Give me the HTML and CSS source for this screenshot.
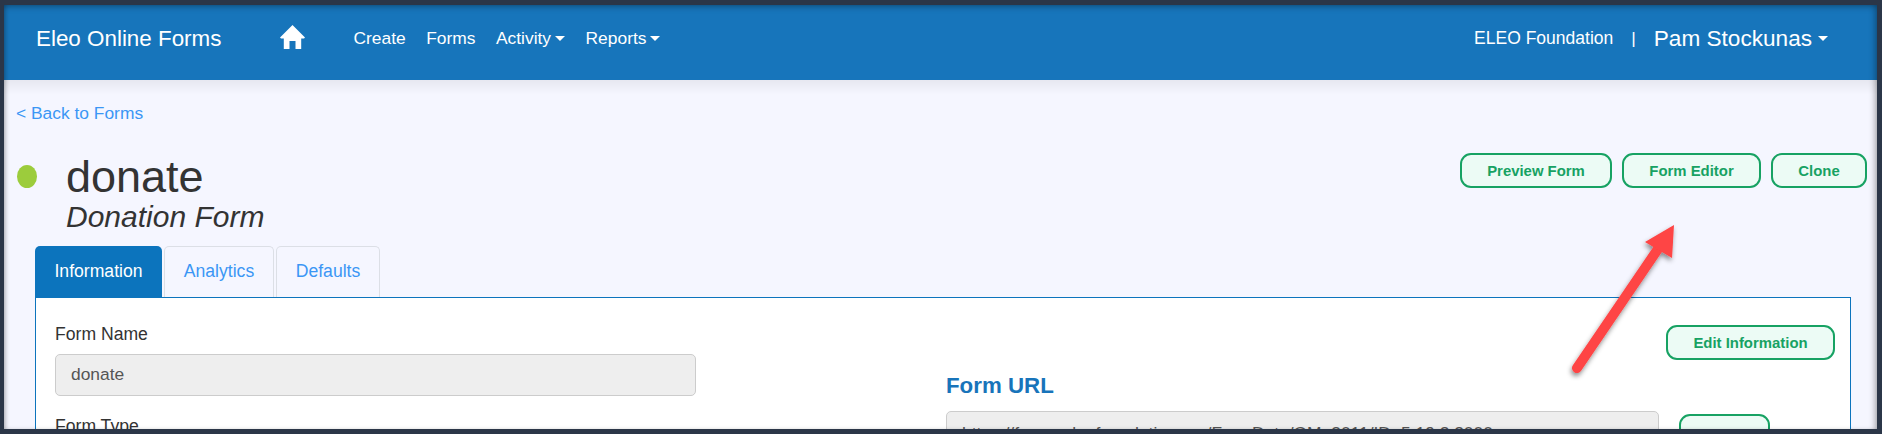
FILE: index.html
```html
<!DOCTYPE html>
<html lang="en">
<head>
<meta charset="utf-8">
<title>Eleo Online Forms</title>
<link rel="stylesheet" href="styles.css">
</head>
<body>
<div class="frame">
  <nav class="navbar">
    <a class="brand">Eleo Online Forms</a>
    <svg class="home" viewBox="0 0 25 24"><path d="M12.5 0 25 12.6 24 13.6h-2.8V24h-5.7v-8h-6v8H3.8V13.6H1L0 12.6z" fill="#fff"/></svg>
    <ul class="menu">
      <li class="menu-item">Create</li>
      <li class="menu-item">Forms</li>
      <li class="menu-item caret">Activity</li>
      <li class="menu-item caret">Reports</li>
    </ul>
    <div class="account">
      <span class="org">ELEO Foundation</span>
      <span class="sep">|</span>
      <span class="user caret">Pam Stockunas</span>
    </div>
  </nav>
  <main class="content">
    <a class="back">&lt; Back to Forms</a>
    <header class="head">
      <span class="dot"></span>
      <div class="titles">
        <h1 class="title">donate</h1>
        <p class="subtitle">Donation Form</p>
      </div>
      <div class="actions">
        <a class="btn btn-preview">Preview Form</a>
        <a class="btn btn-editor">Form Editor</a>
        <a class="btn btn-clone">Clone</a>
      </div>
    </header>
    <ul class="tabs">
      <li class="tab tab-active">Information</li>
      <li class="tab">Analytics</li>
      <li class="tab">Defaults</li>
    </ul>
    <section class="panel">
      <div class="col-left">
        <label class="label">Form Name</label>
        <div class="input input-name">donate</div>
        <label class="label label-type">Form Type</label>
      </div>
      <div class="col-right">
        <div class="edit-row"><a class="btn btn-edit">Edit Information</a></div>
        <h2 class="url-title">Form URL</h2>
        <div class="url-row">
          <div class="input input-url">https://forms.eleofoundation.org/FormData/GM_3011/ID=5,19,2,2000</div>
          <a class="btn btn-copy">Copy</a>
        </div>
      </div>
    </section>
  </main>
  <svg class="arrow" viewBox="0 0 130 170">
    <defs>
      <filter id="arrow-shadow" x="-20%" y="-20%" width="140%" height="140%">
        <feDropShadow dx="-1" dy="3" stdDeviation="2.5" flood-color="#000" flood-opacity=".45"/>
      </filter>
    </defs>
    <g filter="url(#arrow-shadow)">
      <path d="M23 148 106 26" stroke="#fe4444" stroke-width="10" stroke-linecap="round" fill="none"/>
      <path d="M120 5 91 22 118 38z" fill="#fe4444"/>
    </g>
  </svg>
  <div class="shade"></div>
</div>
</body>
</html>
```
FILE: styles.css
```css
* { box-sizing: border-box; }
html, body { margin: 0; height: 100%; }
body {
  background: #2b3648;
  padding: 5px 5px 5px 4px;
  overflow: hidden;
  font-family: "Liberation Sans", Arial, sans-serif;
  font-size: 17.4px;
  color: #333;
}
.frame {
  position: relative;
  height: 424px;
  overflow: hidden;
  background: #f5f6ff;
}
ul { list-style: none; margin: 0; padding: 0; }
.navbar {
  display: flex;
  align-items: center;
  height: 75px;
  padding: 0 49px 8px 32px;
  background: #1775bb;
  color: #fff;
}
.brand { font-size: 22.4px; width: 244px; }
.home { width: 25px; height: 24px; margin-right: 48.5px; margin-top: -3px; }
.menu { display: flex; gap: 20.5px; }
.caret::after {
  content: "";
  display: inline-block;
  margin-left: 4px;
  vertical-align: 3px;
  border-top: 5px solid currentColor;
  border-left: 5.5px solid transparent;
  border-right: 5.5px solid transparent;
}
.account { display: flex; align-items: center; margin-left: auto; }
.org { font-size: 17.5px; }
.sep { margin: 0 18px 0 18px; font-size: 17.4px; }
.user { font-size: 22.6px; }
.user::after { margin-left: 6px; vertical-align: 5px; }
.content { display: block; padding: 0 0 0 31px; }
.back {
  display: block;
  margin: 21px 0 0 -19px;
  line-height: 24px;
  color: #3b96f5;
}
.head {
  display: flex;
  align-items: flex-start;
  height: 93px;
  margin-top: 28px;
  margin-left: -18px;
  padding-right: 10px;
}
.dot {
  flex: none;
  width: 20px;
  height: 23px;
  margin-top: 12px;
  border-radius: 50%;
  background: #9ccc3c;
}
.titles { margin-left: 29px; }
.title { margin: -1px 0 0; font-weight: 400; font-size: 45px; line-height: 50px; }
.subtitle { margin: -4px 0 0; font-style: italic; font-size: 30px; line-height: 37px; }
.actions { display: flex; gap: 10px; margin-left: auto; }
.btn {
  display: flex;
  align-items: center;
  justify-content: center;
  height: 35px;
  border: 2px solid #17a263;
  border-radius: 11px;
  background: #ecfbf5;
  color: #17a263;
  font-size: 14.9px;
  font-weight: 700;
}
.btn-preview { width: 152px; }
.btn-editor { width: 139px; }
.btn-clone { width: 96px; }
.tabs { display: flex; gap: 2px; height: 51px; }
.tab {
  display: flex;
  align-items: center;
  justify-content: center;
  border: 1px solid #dcdfe6;
  border-bottom: 0;
  border-radius: 5px 5px 0 0;
  color: #3b96f5;
  padding-bottom: 1px;
  width: 110px;
  font-size: 17.6px;
}
.tab:last-child { width: 104px; }
.tab-active {
  width: 127px;
  margin-bottom: -1px;
  position: relative;
  border: 0;
  background: #0c74bd;
  color: #fff;
}
.panel {
  display: flex;
  width: 1816px;
  height: 148px;
  border: 1px solid #0c74bd;
  background: #fff;
}
.col-left { width: 910px; padding: 25px 0 0 19px; flex: none; }
.label { display: block; line-height: 22px; font-size: 17.6px; }
.input {
  border: 1px solid #ccc;
  border-radius: 5px;
  background: #eee;
  color: #555;
}
.input-name {
  width: 641px;
  height: 42px;
  margin-top: 9px;
  padding-left: 15px;
  line-height: 38px;
}
.label-type { margin-top: 19px; }
.col-right { flex: 1; padding-right: 15px; }
.edit-row { display: flex; justify-content: flex-end; padding-top: 27px; }
.btn-edit { width: 169px; height: 35px; }
.url-title {
  margin: 13px 0 0;
  font-size: 22.3px;
  font-weight: 700;
  line-height: 26px;
  color: #1874ba;
}
.url-row { display: flex; align-items: flex-start; gap: 20px; margin-top: 12px; }
.input-url {
  width: 713px;
  height: 42px;
  padding: 11px 15px;
  white-space: nowrap;
}
.btn-copy { width: 91px; height: 42px; margin-top: 3px; }
.arrow {
  position: absolute;
  left: 1550px;
  top: 215px;
  width: 130px;
  height: 170px;
}
.shade {
  position: absolute;
  inset: 0;
  pointer-events: none;
  box-shadow: inset 0 5px 6px -3px rgba(0,0,0,.25), inset 4px 0 5px -3px rgba(0,0,0,.3), inset -5px 0 6px -3px rgba(0,0,0,.3);
}
.shade::after {
  content: "";
  position: absolute;
  left: 0;
  right: 0;
  top: 75px;
  height: 15px;
  background: linear-gradient(rgba(0,0,0,.06), rgba(0,0,0,0));
}
```
